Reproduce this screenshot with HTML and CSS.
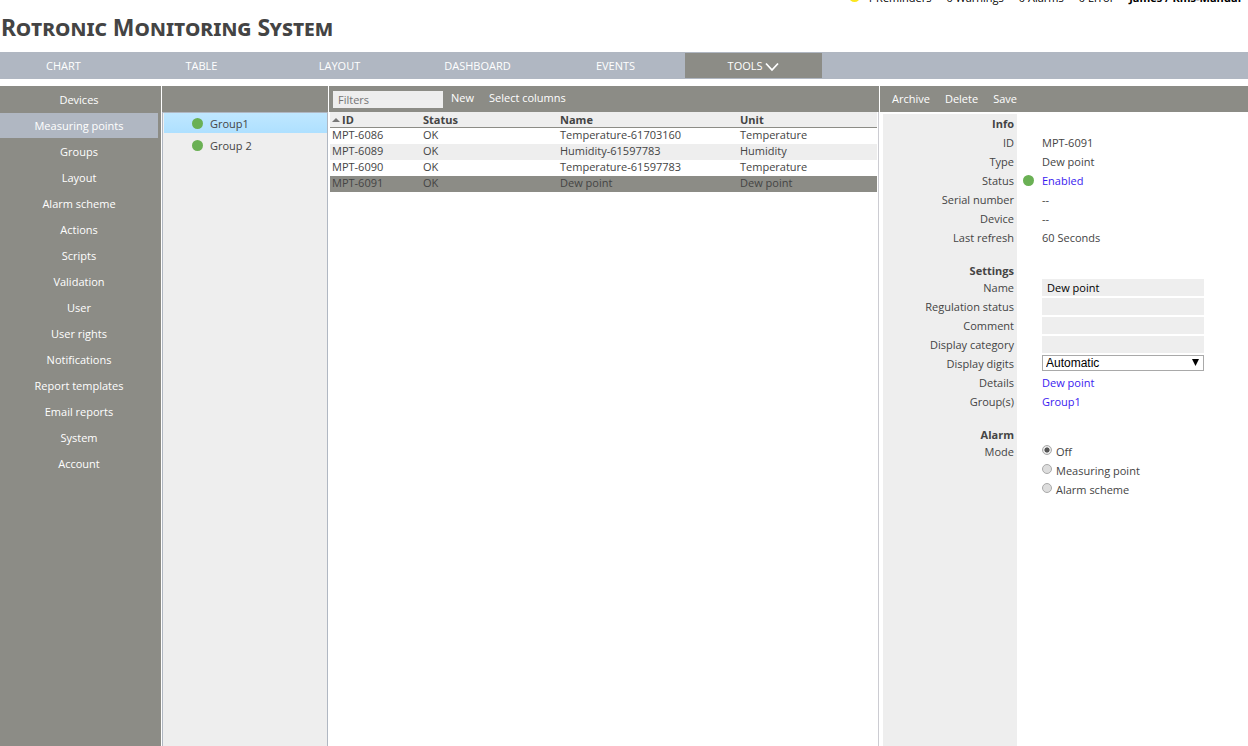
FILE: index.html
```
<!DOCTYPE html>
<html lang="en">

<head>
    <meta charset="UTF-8">
    <meta name="viewport" content="width=device-width, initial-scale=1.0">
    <title>Rotronic Monitoring System</title>

    <link rel="stylesheet" href="styles.css">
</head>

<body>
    <div class="statusbar">
        <span class="dot dot-yellow"></span>
        <span class="status-item">1 Reminders</span>
        <span class="status-item">0 Warnings</span>
        <span class="status-item">0 Alarms</span>
        <span class="status-item">0 Error</span>
        <b>James / Rms-Manual</b>
    </div>
    <h1>Rotronic Monitoring System</h1>

    <nav class="tabs">
        <a href="#">CHART</a>
        <a href="#">TABLE</a>
        <a href="#">LAYOUT</a>
        <a href="#">DASHBOARD</a>
        <a href="#">EVENTS</a>
        <a href="#" class="active">TOOLS
            <svg width="14" height="10" viewBox="0 0 14 10"><path d="M1 1.5L7 8L13 1.5" fill="none" stroke="#fff" stroke-width="1.8"/></svg>
        </a>
    </nav>

    <div class="main">
        <nav class="sidebar">
            <a href="#">Devices</a>
            <a href="#" class="active">Measuring points</a>
            <a href="#">Groups</a>
            <a href="#">Layout</a>
            <a href="#">Alarm scheme</a>
            <a href="#">Actions</a>
            <a href="#">Scripts</a>
            <a href="#">Validation</a>
            <a href="#">User</a>
            <a href="#">User rights</a>
            <a href="#">Notifications</a>
            <a href="#">Report templates</a>
            <a href="#">Email reports</a>
            <a href="#">System</a>
            <a href="#">Account</a>
        </nav>

        <div class="groups">
            <div class="toolbar"></div>
            <div class="group-list">
                <a href="#" class="active"><span class="dot"></span>Group1</a>
                <a href="#"><span class="dot"></span>Group 2</a>
            </div>
        </div>

        <div class="points">
            <div class="toolbar">
                <input class="filter" type="text" placeholder="Filters" aria-label="Filters">
                <button type="button">New</button>
                <button type="button">Select columns</button>
            </div>
            <div class="table-wrap">
                <table>
                    <thead>
                        <tr>
                            <th class="col-id"><span class="sort"></span>ID</th>
                            <th class="col-status">Status</th>
                            <th class="col-name">Name</th>
                            <th>Unit</th>
                        </tr>
                    </thead>
                    <tbody>
                        <tr><td>MPT-6086</td><td>OK</td><td>Temperature-61703160</td><td>Temperature</td></tr>
                        <tr><td>MPT-6089</td><td>OK</td><td>Humidity-61597783</td><td>Humidity</td></tr>
                        <tr><td>MPT-6090</td><td>OK</td><td>Temperature-61597783</td><td>Temperature</td></tr>
                        <tr class="selected"><td>MPT-6091</td><td>OK</td><td>Dew point</td><td>Dew point</td></tr>
                    </tbody>
                </table>
            </div>
        </div>

        <div class="details">
            <div class="toolbar">
                <button type="button">Archive</button>
                <button type="button">Delete</button>
                <button type="button">Save</button>
            </div>
            <form class="detail-form">
                <h2>Info</h2>
                <div class="row"><span class="label">ID</span><span class="value">MPT-6091</span></div>
                <div class="row"><span class="label">Type</span><span class="value">Dew point</span></div>
                <div class="row"><span class="label">Status</span><span class="lamp"><span class="dot"></span></span><a href="#" class="value">Enabled</a></div>
                <div class="row"><span class="label">Serial number</span><span class="value">--</span></div>
                <div class="row"><span class="label">Device</span><span class="value">--</span></div>
                <div class="row"><span class="label">Last refresh</span><span class="value">60 Seconds</span></div>

                <h2 class="section">Settings</h2>
                <div class="row"><label class="label" for="name">Name</label><input class="value" id="name" type="text" value="Dew point"></div>
                <div class="row"><label class="label" for="regulation">Regulation status</label><input class="value" id="regulation" type="text"></div>
                <div class="row"><label class="label" for="comment">Comment</label><input class="value" id="comment" type="text"></div>
                <div class="row"><label class="label" for="category">Display category</label><input class="value" id="category" type="text"></div>
                <div class="row">
                    <label class="label" for="digits">Display digits</label>
                    <div class="value select">
                        <select id="digits"><option>Automatic</option></select>
                        <svg width="7" height="7" viewBox="0 0 7 7"><path d="M0 0H7L3.5 7Z"/></svg>
                    </div>
                </div>
                <div class="row"><span class="label">Details</span><a href="#" class="value">Dew point</a></div>
                <div class="row"><span class="label">Group(s)</span><a href="#" class="value">Group1</a></div>

                <h2 class="section">Alarm</h2>
                <div class="row"><span class="label">Mode</span><label class="value radio"><input type="radio" name="mode" checked>Off</label></div>
                <div class="row"><span class="label"></span><label class="value radio"><input type="radio" name="mode">Measuring point</label></div>
                <div class="row"><span class="label"></span><label class="value radio"><input type="radio" name="mode">Alarm scheme</label></div>
            </form>
        </div>
    </div>
</body>

</html>
```
FILE: styles.css
```
* {
    box-sizing: border-box;
}

body {
    margin: 0;
    min-height: 100vh;
    display: flex;
    flex-direction: column;
    background-color: #fff;
    color: #444;
    font-family: "Open Sans", "Noto Sans", sans-serif;
    font-size: 11px;
    line-height: 16px;
}

a {
    color: #3a1af0;
    text-decoration: none;
}

input,
select,
button {
    font: inherit;
    margin: 0;
}

/* only the lower edge of the status line stays in view */
.statusbar {
    height: 3px;
    display: flex;
    justify-content: flex-end;
    align-items: flex-end;
    padding-right: 7px;
    color: #000;
    line-height: 10px;
}

.status-item {
    margin-right: 15px;
}

.dot {
    width: 11px;
    height: 11px;
    border-radius: 50%;
    background-color: #6ab054;
    flex: none;
}

.dot-yellow {
    background-color: #fbe61e;
    margin: 0 7px 1px 0;
}

h1 {
    height: 49px;
    margin: 0;
    padding-left: 1px;
    font-family: "Noto Sans", sans-serif;
    font-size: 23px;
    line-height: 49px;
    font-variant: small-caps;
}

.tabs {
    display: flex;
    height: 27px;
    padding: 1px 0;
    background-color: #b0b7c2;
    overflow: hidden;
}

.tabs a {
    width: 137px;
    margin-right: 1px;
    color: #fff;
    text-align: center;
    line-height: 25px;
}

.tabs a:first-child {
    margin-left: -5px;
}

.tabs .active {
    background-color: #8c8c86;
}

.tabs svg {
    vertical-align: -2px;
}

.main {
    flex: 1;
    display: flex;
    gap: 1px;
    margin-top: 7px;
}

.sidebar {
    width: 161px;
    padding-top: 1px;
    background-color: #8c8c86;
}

.sidebar a {
    display: block;
    height: 25px;
    margin: 0 3px 1px 0;
    color: #fff;
    text-align: center;
    line-height: 25px;
}

.sidebar .active {
    background-color: #b0b7c2;
}

.toolbar {
    display: flex;
    align-items: center;
    gap: 15px;
    height: 26px;
    background-color: #8c8c86;
}

.toolbar button {
    padding: 0;
    border: 0;
    background: none;
    color: #fff;
    cursor: pointer;
}

.groups {
    width: 166px;
    display: flex;
    flex-direction: column;
}

.group-list {
    flex: 1;
    padding-left: 1px;
    border: 1px solid #b0b7c2;
    border-bottom: 0;
    background-color: #eee;
}

.group-list a {
    display: flex;
    align-items: center;
    gap: 7px;
    height: 20px;
    margin-bottom: 2px;
    padding: 1px 0 0 28px;
    color: #444;
}

.group-list .active {
    background: linear-gradient(#bfe7ff, #aee0ff);
}

.points {
    flex: 1;
    display: flex;
    flex-direction: column;
}

.points .toolbar {
    padding: 0 4px;
}

.points .toolbar button {
    padding-bottom: 2px;
}

.filter {
    width: 110px;
    height: 17px;
    margin-right: -7px;
    padding: 0 5px;
    border: 0;
    background-color: #eee;
}

.filter::placeholder {
    color: #757575;
}

.table-wrap {
    flex: 1;
    padding: 0 1px;
    border-right: 1px solid #ccccd2;
}

table {
    width: 100%;
    table-layout: fixed;
    border-spacing: 0;
    line-height: 15px;
}

th,
td {
    height: 16px;
    padding: 0 2px;
    text-align: left;
}

th {
    background-color: #eee;
    border-bottom: 1px solid #8c8c86;
}

td {
    line-height: 14px;
    vertical-align: top;
}

.col-id {
    width: 91px;
}

.col-status {
    width: 137px;
}

.col-name {
    width: 180px;
}

.sort {
    display: inline-block;
    margin-right: 2px;
    border: 4px solid transparent;
    border-top: 0;
    border-bottom-color: #777;
    vertical-align: 2px;
}

tbody tr:nth-child(even) {
    background-color: #eee;
}

tbody .selected {
    background-color: #8c8c86 !important;
}

.details {
    width: 368px;
    display: flex;
    flex-direction: column;
}

.details .toolbar {
    padding-left: 12px;
}

.detail-form {
    flex: 1;
    margin: 2px 0 0 3px;
    background: linear-gradient(#eee, #eee) no-repeat left / 134px 100%;
}

h2 {
    width: 131px;
    height: 19px;
    margin: 0;
    font-size: 11px;
    line-height: 19px;
    text-align: right;
}

.section {
    height: 17px;
    margin-top: 14px;
}

.row {
    display: flex;
    height: 19px;
    line-height: 19px;
}

.label {
    width: 131px;
    margin-right: 28px;
    text-align: right;
}

.lamp {
    display: flex;
    align-items: center;
    width: 19px;
    margin-left: -19px;
}

input.value {
    width: 162px;
    height: 17px;
    margin-top: 1px;
    padding: 0 5px;
    border: 0;
    background-color: #eee;
}

.select {
    position: relative;
    width: 162px;
}

.select select {
    display: block;
    width: 162px;
    height: 16px;
    margin-top: 1px;
    padding: 0 3px;
    border: 1px solid #a9a9a9;
    background-color: #fff;
    color: #000;
    font-family: "Liberation Sans", sans-serif;
    font-size: 12px;
    line-height: 14px;
    appearance: none;
}

.select svg {
    position: absolute;
    top: 5px;
    right: 5px;
    pointer-events: none;
}

.radio {
    display: flex;
    gap: 4px;
}

.radio input {
    width: 10px;
    height: 10px;
    margin-top: 3px;
    border: 1px solid #aaa;
    border-radius: 50%;
    background-color: #ddd;
    appearance: none;
}

.radio input:checked {
    background: radial-gradient(#555 40%, #e6e6e6 50%);
}
```
